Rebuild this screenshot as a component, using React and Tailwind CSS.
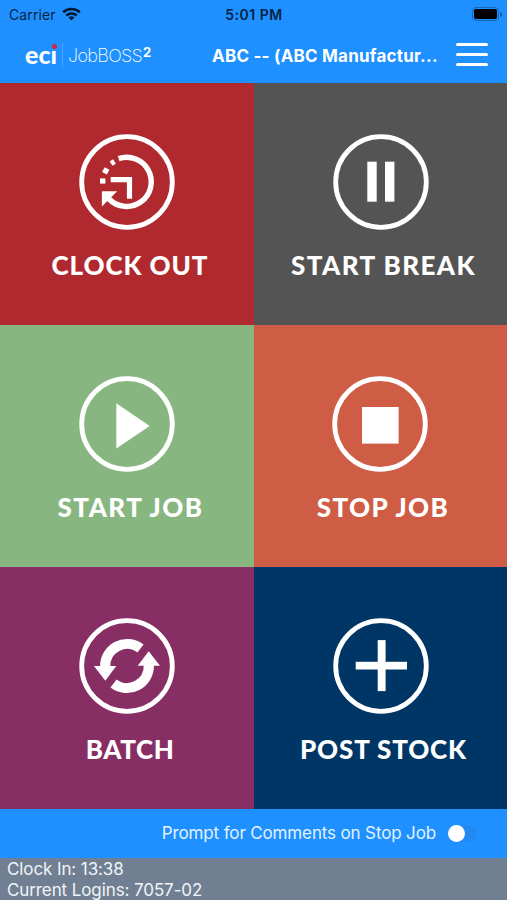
import { clsx } from "clsx";

function ClockOutIcon() {
  return (
    <>
      <path d="M39.6 24.6A24.6 24.6 0 1 1 30 65" fill="none" stroke="currentColor" strokeWidth="5.4" />
      <path d="M22.9 57.3H38.2L22.9 72.6Z" />
      <path d="M31.7 45.6H50.5V64.7" fill="none" stroke="currentColor" strokeWidth="5.2" />
      <rect x="21" y="44.4" width="5.4" height="5.2" />
      <rect x="24" y="34.2" width="5.4" height="5.4" transform="rotate(28 26.8 37)" />
      <rect x="31.8" y="26" width="4" height="5.2" transform="rotate(-32 33.7 28.6)" />
    </>
  );
}

function PauseIcon() {
  return (
    <>
      <rect x="34.3" y="27.7" width="9.4" height="40" />
      <rect x="52" y="27.7" width="9.4" height="40" />
    </>
  );
}

function PlayIcon() {
  return <path d="M37.3 27.3L70.7 50L37.3 72.5Z" />;
}

function StopIcon() {
  return <rect x="30" y="31" width="36.6" height="36.6" />;
}

function BatchIcon() {
  return (
    <>
      <path
        d="M61.5 30.5A22 22 0 0 0 26.2 49M34.5 65.5A22 22 0 0 0 69.8 47"
        fill="none"
        stroke="currentColor"
        strokeWidth="10.2"
      />
      <path d="M15 48H37.3L26.3 62.7Z" />
      <path d="M58.7 47.8H81L69.7 33.3Z" />
    </>
  );
}

function PlusIcon() {
  return (
    <>
      <rect x="22.7" y="43.8" width="51.3" height="7.7" />
      <rect x="44.7" y="22.1" width="7.9" height="51" />
    </>
  );
}

const tiles = [
  { label: "CLOCK OUT", color: "bg-[#b0292e]", text: "tracking-[0.9px] ml-[6px]", Icon: ClockOutIcon },
  { label: "START BREAK", color: "bg-[#545454]", text: "tracking-[1.4px] ml-[6px]", Icon: PauseIcon },
  { label: "START JOB", color: "bg-[#88b680]", text: "tracking-[1.45px] ml-[7px]", Icon: PlayIcon },
  { label: "STOP JOB", color: "bg-[#cf5c45] pr-[2px]", text: "tracking-[1.4px] ml-[7px]", Icon: StopIcon },
  { label: "BATCH", color: "bg-[#872e64]", text: "tracking-[0.6px] ml-[6px]", Icon: BatchIcon },
  { label: "POST STOCK", color: "bg-[#003666]", text: "tracking-[0.85px] ml-[6px]", Icon: PlusIcon },
];

function StatusBar() {
  return (
    <div className="grid h-7 grid-cols-3 items-center pl-[9px] pr-[5px] text-[14px] text-[#062344]">
      <div className="flex items-center gap-1.5">
        <span className="tracking-[0.1px]">Carrier</span>
        <svg className="h-[14px] w-[19px]" viewBox="0 0 19 14" fill="none" stroke="#041a33" strokeWidth="2.6">
          <path d="M1.2 5.3A12 12 0 0 1 17.8 5.3" />
          <path d="M4.3 8.6A7.6 7.6 0 0 1 14.7 8.6" />
          <path d="M9.5 13.6L6.5 10.6A4.4 4.4 0 0 1 12.5 10.6Z" fill="#041a33" stroke="none" />
        </svg>
      </div>
      <span className="-ml-[3px] text-center font-semibold tracking-[0.5px]">5:01 PM</span>
      <div className="flex items-center justify-end gap-px">
        <div className="h-[14px] w-[27px] rounded-[4px] border border-[#1667b8] p-px">
          <div className="h-full rounded-[2px] bg-black" />
        </div>
        <div className="h-[5px] w-[2px] rounded-r-full bg-[#1667b8]" />
      </div>
    </div>
  );
}

function Logo() {
  return (
    <div className="flex h-6 w-[128px] items-center text-white">
      <span className="relative -mt-[2px] font-['Lato','Liberation_Sans',sans-serif] text-[25px] leading-6 font-black">
        ecı
        <span className="absolute top-[2px] right-0 size-[5px] rounded-full bg-[#d7263d]" />
      </span>
      <span className="ml-[5px] h-6 w-px bg-[#4ba6ff]" />
      <span className="ml-[5px] flex text-[18px] leading-6 font-extralight tracking-[-0.7px]">
        <span className="mt-[2px]">JobBOSS</span>
        <span className="ml-px text-[13px] leading-[20px] font-bold tracking-normal">2</span>
      </span>
    </div>
  );
}

function Header() {
  return (
    <header className="h-[83px] bg-[#1e90ff]">
      <StatusBar />
      <div className="flex h-[54px] items-center pr-[19px] pl-[25px] text-white">
        <Logo />
        <h1 className="mt-[3px] ml-[59px] w-[228px] text-[17px] font-bold tracking-[0.22px] whitespace-nowrap">
          ABC -- (ABC Manufactur...
        </h1>
        <button type="button" aria-label="Menu" className="-mt-[2px] ml-auto flex w-8 flex-col gap-[7px]">
          <span className="h-[3px] rounded-full bg-white" />
          <span className="h-[3px] rounded-full bg-white" />
          <span className="h-[3px] rounded-full bg-white" />
        </button>
      </div>
    </header>
  );
}

function Tile({ label, color, text, Icon }) {
  return (
    <button type="button" className={clsx("flex flex-col items-center pt-[51px] text-white", color)}>
      <svg className="size-24 shrink-0" viewBox="0 0 96 96" fill="currentColor">
        <circle cx="48" cy="48" r="45.3" fill="none" stroke="currentColor" strokeWidth="4.8" />
        <Icon />
      </svg>
      <span
        className={clsx(
          "mt-5 font-['Lato','Inter',sans-serif] text-[26px] leading-[30px] font-black whitespace-nowrap",
          text,
        )}
      >
        {label}
      </span>
    </button>
  );
}

function App() {
  return (
    <main className="flex h-[900px] w-[507px] flex-col overflow-hidden font-['Inter','Liberation_Sans',sans-serif]">
      <Header />
      <div className="grid h-[726px] grid-cols-[254px_253px] grid-rows-3">
        {tiles.map((tile) => (
          <Tile key={tile.label} {...tile} />
        ))}
      </div>
      <div className="flex h-[49px] items-center justify-end bg-[#1e90ff] pr-[31px] text-[#e4f2ff]">
        <span className="text-[17px] tracking-[-0.14px]">Prompt for Comments on Stop Job</span>
        <span className="ml-3 flex h-[17px] w-[28px] items-center rounded-full bg-[#2389f0]">
          <span className="size-[17px] rounded-full bg-white" />
        </span>
      </div>
      <footer className="h-[42px] bg-[#708092] pt-px pl-[7px] text-[17px] leading-[21px] tracking-[-0.1px] text-[#f0f4f8]">
        <p>Clock In: 13:38</p>
        <p>Current Logins: 7057-02</p>
      </footer>
    </main>
  );
}

export default App;
